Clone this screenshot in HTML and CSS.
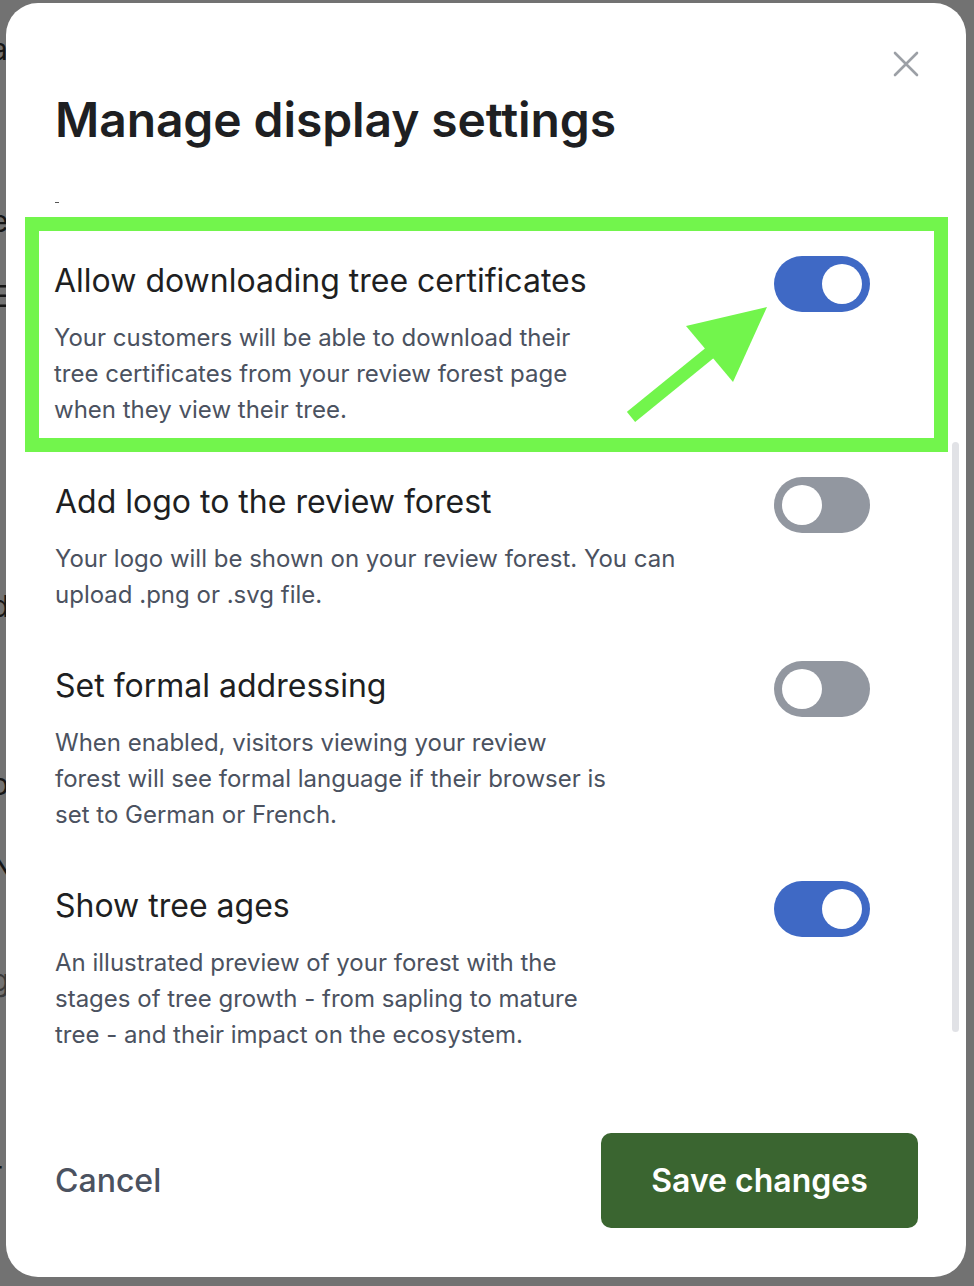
FILE: index.html
```html
<!DOCTYPE html>
<html lang="en">
<head>
  <meta charset="UTF-8">
  <title>Manage display settings</title>
  <link rel="stylesheet" href="styles.css">
</head>
<body>
  <div class="backdrop">
    <div class="backdrop-col">
      <span class="bg-char c1">a</span>
      <span class="bg-char c2">e</span>
      <span class="bg-char c3">E</span>
      <span class="bg-char c4">d</span>
      <span class="bg-char c5">o</span>
      <span class="bg-char c6">N</span>
      <span class="bg-char c7">g</span>
      <span class="bg-char c8">r</span>
    </div>

    <div class="modal">
      <button class="close-btn" aria-label="Close">
        <svg width="26" height="26" viewBox="0 0 26 26" fill="none">
          <path d="M2 2L24 24M24 2L2 24" stroke="#9ca0a6" stroke-width="2.6" stroke-linecap="round"/>
        </svg>
      </button>

      <h1 class="modal-title">Manage display settings</h1>

      <div class="settings">
        <span class="clip-mark"></span>

        <div class="setting highlighted">
          <div class="setting-text">
            <h2>Allow downloading tree certificates</h2>
            <p>Your customers will be able to download their<br>tree certificates from your review forest page<br>when they view their tree.</p>
          </div>
          <span class="toggle on"></span>
          <svg class="arrow" width="150" height="135" viewBox="0 0 150 135">
            <path d="M4 126L90 56" stroke="#72f54c" stroke-width="13"/>
            <polygon points="59,35 140,16 106,91" fill="#72f54c"/>
          </svg>
        </div>

        <div class="setting">
          <div class="setting-text">
            <h2>Add logo to the review forest</h2>
            <p>Your logo will be shown on your review forest. You can<br>upload .png or .svg file.</p>
          </div>
          <span class="toggle"></span>
        </div>

        <div class="setting">
          <div class="setting-text">
            <h2>Set formal addressing</h2>
            <p>When enabled, visitors viewing your review<br>forest will see formal language if their browser is<br>set to German or French.</p>
          </div>
          <span class="toggle"></span>
        </div>

        <div class="setting">
          <div class="setting-text">
            <h2>Show tree ages</h2>
            <p>An illustrated preview of your forest with the<br>stages of tree growth - from sapling to mature<br>tree - and their impact on the ecosystem.</p>
          </div>
          <span class="toggle on"></span>
        </div>

        <span class="scrollbar"></span>
      </div>

      <div class="modal-footer">
        <button class="btn-cancel">Cancel</button>
        <button class="btn-save">Save changes</button>
      </div>
    </div>
  </div>
</body>
</html>
```

FILE: styles.css
```css
body {
  margin: 0;
  background-color: #727272;
  font-family: Inter, "Noto Sans", sans-serif;
}

.backdrop {
  display: flex;
  height: 1286px;
  overflow: hidden;
}

.backdrop-col {
  width: 6px;
  display: flex;
  flex-direction: column;
  overflow: hidden;
  color: #161616;
  font-size: 30px;
  line-height: 30px;
}

.bg-char {
  display: block;
  margin-left: -9px;
}

.c1 { margin-top: 34px; }
.c2 { margin-top: 142px; }
.c3 { margin-top: 45px; }
.c4 { margin-top: 280px; }
.c5 { margin-top: 148px; }
.c6 { margin-top: 52px; }
.c7 { margin-top: 84px; color: #3a3a3a; }
.c8 { margin-top: 162px; }

.modal {
  position: relative;
  width: 960px;
  height: 1274px;
  margin-top: 3px;
  background-color: #ffffff;
  border-radius: 32px;
  display: flex;
  flex-direction: column;
  overflow: hidden;
}

.close-btn {
  position: absolute;
  top: 48px;
  right: 47px;
  padding: 0;
  border: none;
  background: none;
  cursor: pointer;
}

.modal-title {
  margin: 89px 0 0 49px;
  font-size: 48px;
  font-weight: 600;
  line-height: 56px;
  color: #1e1f22;
  letter-spacing: -0.1px;
}

.settings {
  position: relative;
  margin-top: 69px;
  padding-left: 19px;
  display: flex;
  flex-direction: column;
}

.clip-mark {
  position: absolute;
  top: -15px;
  left: 49px;
  width: 4px;
  height: 1px;
  background-color: #555;
}

.setting {
  position: relative;
  width: 923px;
  box-sizing: border-box;
  display: flex;
  justify-content: space-between;
  align-items: flex-start;
  padding: 25px 78px 23px 30px;
}

.setting.highlighted {
  border: 14px solid #72f54c;
  padding: 25px 64px 10px 15px;
}

.setting-text h2 {
  margin: 5px 0 0;
  font-size: 32px;
  font-weight: 400;
  line-height: 40px;
  color: #1e1f22;
  letter-spacing: 0;
}

.setting-text p {
  margin: 19px 0 0;
  font-size: 24px;
  line-height: 36px;
  color: #4b5260;
}

.toggle {
  position: relative;
  flex-shrink: 0;
  width: 96px;
  height: 56px;
  border-radius: 28px;
  background-color: #9297a0;
}

.toggle::after {
  content: "";
  position: absolute;
  top: 8px;
  left: 8px;
  width: 40px;
  height: 40px;
  border-radius: 50%;
  background-color: #ffffff;
}

.toggle.on {
  background-color: #3f69c5;
}

.toggle.on::after {
  left: 48px;
}

.arrow {
  position: absolute;
  left: 588px;
  top: 60px;
}

.scrollbar {
  position: absolute;
  top: 225px;
  left: 946px;
  width: 7px;
  height: 590px;
  border-radius: 4px;
  background-color: #e1e2e6;
}

.modal-footer {
  margin-top: auto;
  display: flex;
  justify-content: space-between;
  align-items: center;
  padding: 0 48px 49px 49px;
}

.btn-cancel {
  padding: 0;
  border: none;
  background: none;
  font-family: inherit;
  font-size: 32px;
  font-weight: 500;
  color: #4b5260;
  cursor: pointer;
}

.btn-save {
  width: 317px;
  height: 95px;
  border: none;
  border-radius: 10px;
  background-color: #3a6530;
  color: #ffffff;
  font-family: inherit;
  font-size: 32px;
  font-weight: 600;
  cursor: pointer;
}
```
